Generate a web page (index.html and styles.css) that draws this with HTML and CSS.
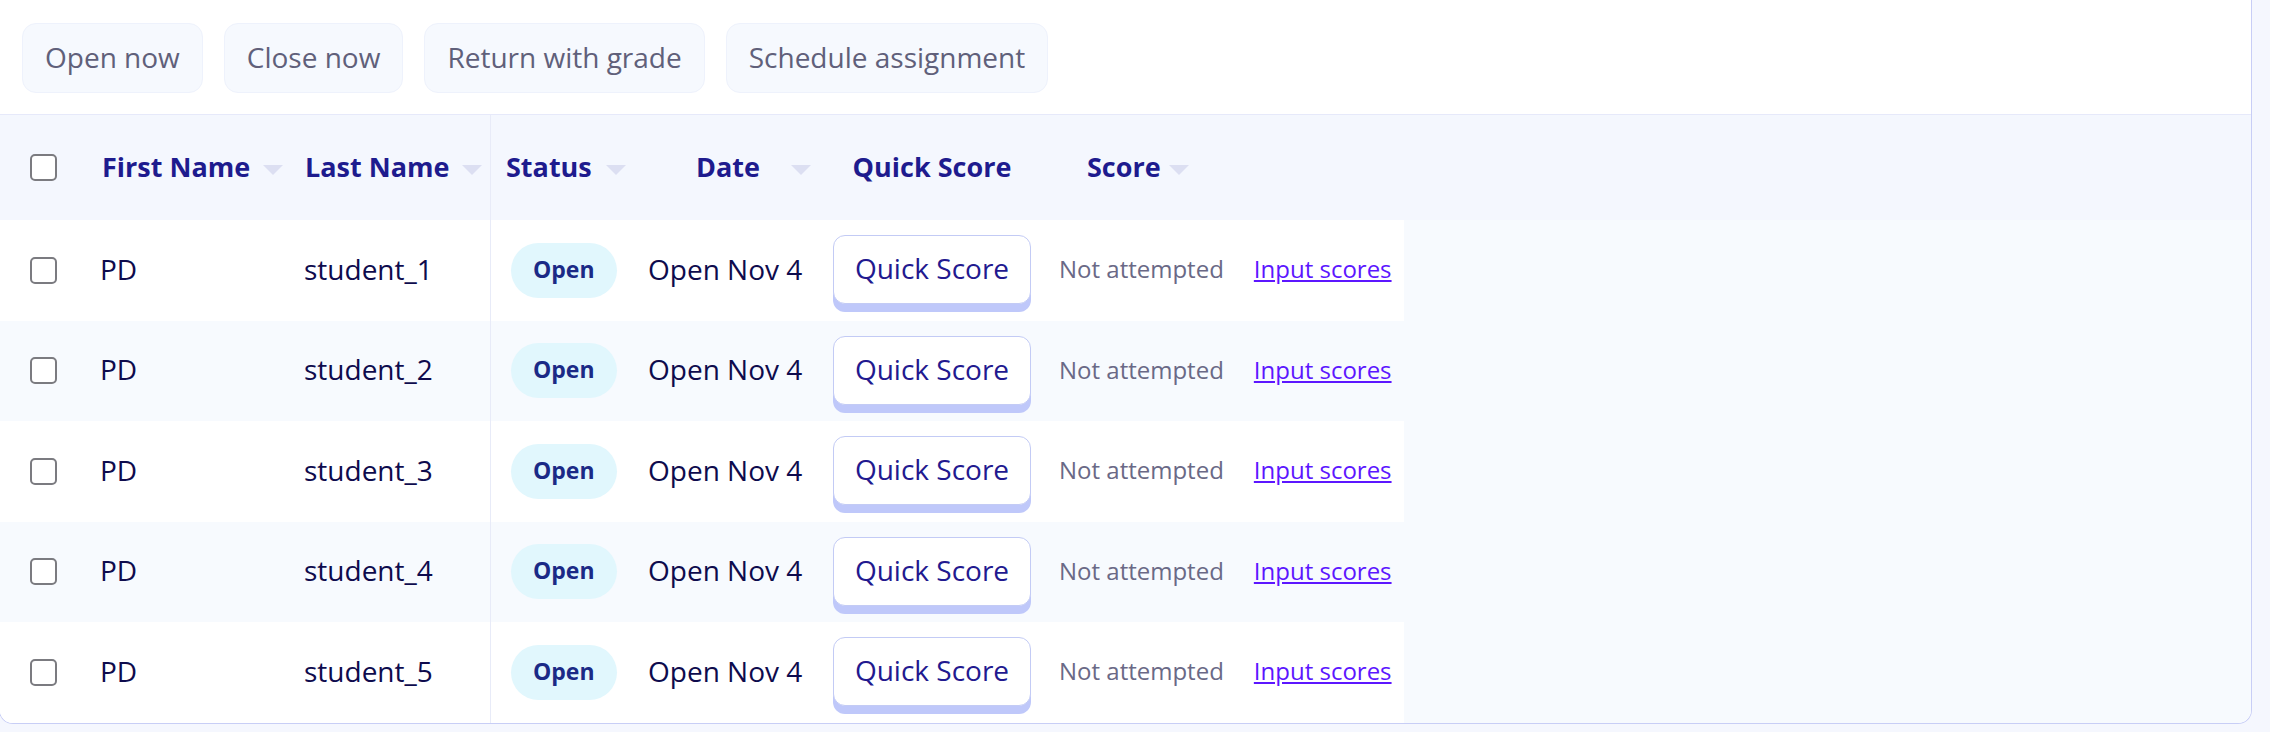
FILE: index.html
```html
<!DOCTYPE html>
<html>
	<head>
		<meta charset="UTF-8">
		<title>Assignment students</title>
		<link rel="stylesheet" href="styles.css">
	</head>
	<body>
		<div class="panel">
			<div class="toolbar">
				<button class="tool-btn">Open now</button>
				<button class="tool-btn">Close now</button>
				<button class="tool-btn">Return with grade</button>
				<button class="tool-btn">Schedule assignment</button>
			</div>

			<div class="grid-head">
				<div class="row">
					<div class="cell c-check"><input type="checkbox" class="check"></div>
					<div class="cell c-first"><span>First Name</span><i class="sort"></i></div>
					<div class="cell c-last"><span>Last Name</span><i class="sort"></i></div>
					<div class="cell c-status"><span>Status</span><i class="sort"></i></div>
					<div class="cell c-date"><span>Date</span><i class="sort"></i></div>
					<div class="cell c-quick"><span>Quick Score</span></div>
					<div class="cell c-score"><span>Score</span><i class="sort"></i></div>
				</div>
			</div>

			<div class="grid-body">
				<div class="row">
					<div class="cell c-check"><input type="checkbox" class="check"></div>
					<div class="cell c-first">PD</div>
					<div class="cell c-last">student_1</div>
					<div class="cell c-status"><span class="badge">Open</span></div>
					<div class="cell c-date">Open Nov 4</div>
					<div class="cell c-quick"><button class="quick-btn">Quick Score</button></div>
					<div class="cell c-score"><span class="muted">Not attempted</span><a href="#" class="link">Input scores</a></div>
				</div>
				<div class="row">
					<div class="cell c-check"><input type="checkbox" class="check"></div>
					<div class="cell c-first">PD</div>
					<div class="cell c-last">student_2</div>
					<div class="cell c-status"><span class="badge">Open</span></div>
					<div class="cell c-date">Open Nov 4</div>
					<div class="cell c-quick"><button class="quick-btn">Quick Score</button></div>
					<div class="cell c-score"><span class="muted">Not attempted</span><a href="#" class="link">Input scores</a></div>
				</div>
				<div class="row">
					<div class="cell c-check"><input type="checkbox" class="check"></div>
					<div class="cell c-first">PD</div>
					<div class="cell c-last">student_3</div>
					<div class="cell c-status"><span class="badge">Open</span></div>
					<div class="cell c-date">Open Nov 4</div>
					<div class="cell c-quick"><button class="quick-btn">Quick Score</button></div>
					<div class="cell c-score"><span class="muted">Not attempted</span><a href="#" class="link">Input scores</a></div>
				</div>
				<div class="row">
					<div class="cell c-check"><input type="checkbox" class="check"></div>
					<div class="cell c-first">PD</div>
					<div class="cell c-last">student_4</div>
					<div class="cell c-status"><span class="badge">Open</span></div>
					<div class="cell c-date">Open Nov 4</div>
					<div class="cell c-quick"><button class="quick-btn">Quick Score</button></div>
					<div class="cell c-score"><span class="muted">Not attempted</span><a href="#" class="link">Input scores</a></div>
				</div>
				<div class="row">
					<div class="cell c-check"><input type="checkbox" class="check"></div>
					<div class="cell c-first">PD</div>
					<div class="cell c-last">student_5</div>
					<div class="cell c-status"><span class="badge">Open</span></div>
					<div class="cell c-date">Open Nov 4</div>
					<div class="cell c-quick"><button class="quick-btn">Quick Score</button></div>
					<div class="cell c-score"><span class="muted">Not attempted</span><a href="#" class="link">Input scores</a></div>
				</div>
			</div>
		</div>
	</body>
</html>
```

FILE: styles.css
```css
*{
	margin: 0;
	padding: 0;
	box-sizing: border-box;
}
body{
	background-color: #f5f7fe;
	font-family: "Open Sans", Lato, sans-serif;
	color: #0e0b4d;
}
.panel{
	width: 2253px;
	margin-left: -1px;
	background-color: #fff;
	border: 1px solid #c8cef6;
	border-top: none;
	border-radius: 0 0 14px 14px;
	overflow: hidden;
}

/* top actions */
.toolbar{
	display: flex;
	gap: 21px;
	padding: 23px 22px 21px;
	height: 114px;
}
.tool-btn{
	height: 70px;
	padding: 0 22px 3px;
	background-color: #f6f9fe;
	border: 1px solid #eef2fc;
	border-radius: 14px;
	font-family: inherit;
	font-size: 28px;
	color: #60607a;
	cursor: pointer;
}

/* shared columns */
.row{
	display: grid;
	grid-template-columns: 90px 201px 199px 144px 185px 226px 359px;
	width: 1404px;
}
.cell{
	display: flex;
	align-items: center;
	font-size: 28px;
	white-space: nowrap;
	padding-bottom: 3px;
}
.c-check{
	padding-left: 30px;
	padding-bottom: 0;
}
.c-first{
	padding-left: 10px;
}
.c-last{
	padding-left: 13px;
}
.c-status{
	border-left: 1px solid #e8ebf8;
	padding-left: 20px;
	padding-bottom: 0;
}
.c-date{
	padding-left: 14px;
}
.c-quick{
	padding-left: 14px;
	padding-bottom: 0;
}
.c-score{
	padding-left: 14px;
	gap: 30px;
}

.check{
	appearance: none;
	-webkit-appearance: none;
	width: 27px;
	height: 27px;
	border: 2px solid #7b7b80;
	border-radius: 5px;
	background-color: #fff;
	cursor: pointer;
}

/* header */
.grid-head{
	background-color: #f4f7fe;
	border-top: 1px solid #e6e9fa;
}
.grid-head .row{
	height: 105px;
}
.grid-head .cell{
	font-size: 27px;
	font-weight: 700;
	color: #1e1b8e;
	justify-content: space-between;
	padding-right: 8px;
	padding-bottom: 2px;
}
.grid-head .c-check{
	padding-bottom: 0;
}
.grid-head .c-first{
	padding-left: 12px;
}
.grid-head .c-last{
	padding-left: 14px;
}
.grid-head .c-status{
	padding-left: 15px;
}
.grid-head .c-date{
	padding-left: 62px;
}
.grid-head .c-quick{
	justify-content: center;
	padding-left: 0;
	padding-right: 0;
}
.grid-head .c-score{
	justify-content: flex-start;
	padding-left: 42px;
	gap: 8px;
}
.sort{
	width: 0;
	height: 0;
	border-left: 10px solid transparent;
	border-right: 10px solid transparent;
	border-top: 10px solid #dcdff2;
	margin-top: 6px;
}

/* body rows */
.grid-body{
	background-color: #f7fafe;
}
.grid-body .row{
	height: 100.5px;
}
.grid-body .row:nth-child(odd){
	background-color: #fff;
}

.badge{
	display: inline-block;
	height: 55px;
	line-height: 53px;
	padding: 0 22px;
	border-radius: 28px;
	background-color: #e1f7fd;
	color: #1b2a86;
	font-size: 23px;
	font-weight: 700;
}
.quick-btn{
	height: 69px;
	width: 198px;
	margin-top: -1px;
	padding-bottom: 3px;
	background-color: #fff;
	border: 1px solid #c3cbf5;
	border-radius: 12px;
	box-shadow: 0 8px 0 #bfc8fa;
	font-family: inherit;
	font-size: 28px;
	color: #22198f;
	cursor: pointer;
}
.muted{
	font-size: 24px;
	color: #6a6986;
}
.link{
	font-size: 24px;
	color: #5c16ff;
}
```
